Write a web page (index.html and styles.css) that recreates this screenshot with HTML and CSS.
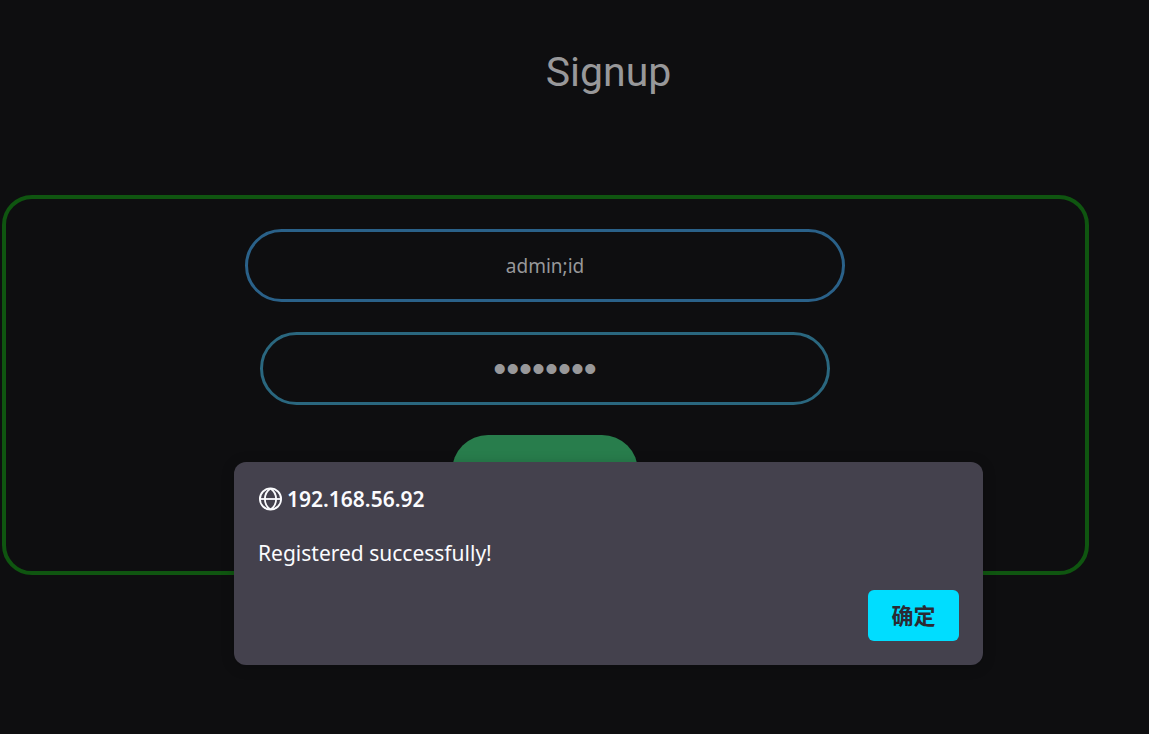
FILE: index.html
```html
<!DOCTYPE html>
<html lang="en">
  <head>
    <meta charset="UTF-8">
    <meta name="viewport" content="width=device-width, initial-scale=1">
    <title>Signup</title>
    <link rel="stylesheet" href="styles.css">
  </head>
  <body>
    <h1 class="title">Signup</h1>

    <form class="signup-box">
      <input class="field field-name" type="text" name="username" aria-label="Username" value="admin;id">
      <input class="field field-password" type="password" name="password" aria-label="Password" value="password">
      <button class="submit-btn" type="submit" aria-label="Signup"></button>
    </form>

    <div class="overlay">
      <div class="dialog" role="alertdialog" aria-labelledby="dialog-host" aria-describedby="dialog-text">
        <div class="dialog-header">
          <svg class="globe" viewBox="0 0 24 24" fill="none" stroke="currentColor" stroke-width="1.8" aria-hidden="true">
            <circle cx="12.5" cy="12" r="10.6"/>
            <path d="M12.5 1.4C5 6.5 5 17.5 12.5 22.6M12.5 1.4C20 6.5 20 17.5 12.5 22.6"/>
            <path d="M2 12h21"/>
          </svg>
          <span id="dialog-host">192.168.56.92</span>
        </div>
        <p class="dialog-text" id="dialog-text">Registered successfully!</p>
        <div class="dialog-buttons">
          <button class="ok-btn" type="button" lang="zh-CN">确定</button>
        </div>
      </div>
    </div>
  </body>
</html>
```

FILE: styles.css
```css
* {
  box-sizing: border-box;
}
body {
  position: relative;
  min-height: 100vh;
  margin: 0;
  padding: 47px 60px 0 2px;
  background: #0e0e10;
  font-family: "Noto Sans", "Noto Sans CJK SC", sans-serif;
}
.title {
  margin: 0 -60px 98px 66px;
  color: #98989a;
  font-family: Roboto, sans-serif;
  font-size: 41px;
  font-weight: 400;
  line-height: 50px;
  text-align: center;
}
.signup-box {
  display: flex;
  flex-direction: column;
  align-items: center;
  gap: 30px;
  padding: 30px 21px 64px 20px;
  border: 4px solid #0f5510;
  border-radius: 30px;
}
.field {
  width: 100%;
  height: 73px;
  padding: 0 20px;
  border: 3px solid #2a6189;
  border-radius: 40px;
  outline: none;
  background: none;
  color: #98989a;
  font-family: "Noto Sans", sans-serif;
  font-size: 19px;
  text-align: center;
}
.field-name {
  max-width: 600px;
}
.field-password {
  max-width: 570px;
  border-color: #2a677f;
  font-family: "Liberation Sans", sans-serif;
  font-size: 37px;
}
.submit-btn {
  width: 186px;
  height: 72px;
  border: none;
  border-radius: 36px;
  background: #287d4c;
  cursor: pointer;
}

/* alert shown over the form */
.overlay {
  position: absolute;
  inset: 0;
  display: flex;
  justify-content: center;
  align-items: flex-start;
  padding: 462px 0 0 68px;
}
.dialog {
  width: 100%;
  max-width: 749px;
  padding: 24px;
  border-radius: 12px;
  background: #44414d;
  color: #fbfbfe;
  font-size: 21px;
  box-shadow: 0 2px 14px rgba(0, 0, 0, 0.2);
}
.dialog-header {
  display: flex;
  align-items: center;
  gap: 5px;
  font-weight: 600;
  line-height: 26px;
}
.globe {
  width: 24px;
  height: 24px;
}
.dialog-text {
  margin: 28px 0 24px;
  line-height: 26px;
}
.dialog-buttons {
  display: flex;
  justify-content: flex-end;
}
.ok-btn {
  width: 91px;
  height: 51px;
  padding: 0 0 3px;
  border: none;
  border-radius: 6px;
  background: #00ddff;
  color: #2b2a33;
  font-family: "Noto Sans CJK SC", sans-serif;
  font-size: 22px;
  font-weight: 600;
  cursor: pointer;
}
```
